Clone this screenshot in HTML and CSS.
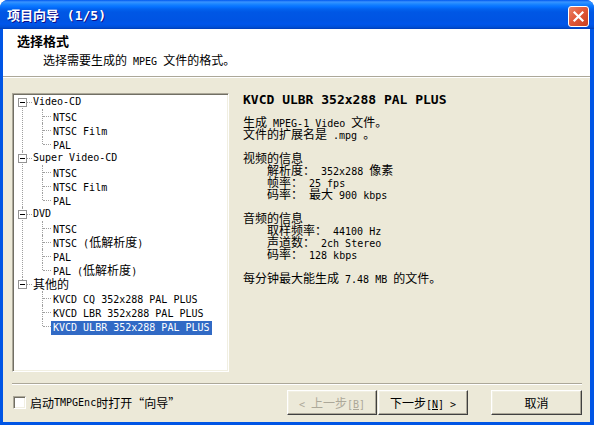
FILE: index.html
```html
<!DOCTYPE html>
<html lang="zh-CN">
<head>
    <meta charset="UTF-8">
    <meta name="viewport" content="width=device-width, initial-scale=1.0">
    <title>项目向导</title>
    <link rel="stylesheet" href="styles.css">
</head>
<body>
    <div class="window">
        <div class="titlebar">
            <span class="title">项目向导<span class="title-num"> (1/5)</span></span>
            <button class="close" aria-label="关闭">
                <svg width="21" height="21" viewBox="0 0 21 21"><path d="M6.5 6.5 L14.5 14.5 M14.5 6.5 L6.5 14.5" stroke="#fff" stroke-width="2.2" stroke-linecap="square"/></svg>
            </button>
        </div>

        <div class="frame">
            <div class="header">
                <div class="h-title">选择格式</div>
                <div class="h-sub">选择需要生成的<span class="en"> MPEG </span>文件的格式。</div>
            </div>

            <div class="body">
                <div class="main">
                    <div class="tree">
                        <div class="group">
                            <div class="node"><span class="expander"></span><span class="en">Video-CD</span></div>
                            <div class="leaf"><span class="label en">NTSC</span></div>
                            <div class="leaf"><span class="label en">NTSC Film</span></div>
                            <div class="leaf last"><span class="label en">PAL</span></div>
                        </div>
                        <div class="group">
                            <div class="node"><span class="expander"></span><span class="en">Super Video-CD</span></div>
                            <div class="leaf"><span class="label en">NTSC</span></div>
                            <div class="leaf"><span class="label en">NTSC Film</span></div>
                            <div class="leaf last"><span class="label en">PAL</span></div>
                        </div>
                        <div class="group">
                            <div class="node"><span class="expander"></span><span class="en">DVD</span></div>
                            <div class="leaf"><span class="label en">NTSC</span></div>
                            <div class="leaf"><span class="label"><span class="en">NTSC (</span>低解析度<span class="en">)</span></span></div>
                            <div class="leaf"><span class="label en">PAL</span></div>
                            <div class="leaf last"><span class="label"><span class="en">PAL (</span>低解析度<span class="en">)</span></span></div>
                        </div>
                        <div class="group">
                            <div class="node"><span class="expander"></span><span>其他的</span></div>
                            <div class="leaf"><span class="label en">KVCD CQ 352x288 PAL PLUS</span></div>
                            <div class="leaf"><span class="label en">KVCD LBR 352x288 PAL PLUS</span></div>
                            <div class="leaf last selected"><span class="label en">KVCD ULBR 352x288 PAL PLUS</span></div>
                        </div>
                    </div>

                    <div class="info">
                        <div class="info-title">KVCD ULBR 352x288 PAL PLUS</div>
                        <div class="line">生成<span class="en"> MPEG-1 Video </span>文件。</div>
                        <div class="line">文件的扩展名是<span class="en"> .mpg </span>。</div>
                        <div class="line"></div>
                        <div class="line">视频的信息</div>
                        <div class="line sub">解析度：<span class="en"> 352x288 </span>像素</div>
                        <div class="line sub">帧率：<span class="en"> 25 fps</span></div>
                        <div class="line sub">码率：<span class="en"> </span>最大<span class="en"> 900 kbps</span></div>
                        <div class="line"></div>
                        <div class="line">音频的信息</div>
                        <div class="line sub">取样频率：<span class="en"> 44100 Hz</span></div>
                        <div class="line sub">声道数：<span class="en"> 2ch Stereo</span></div>
                        <div class="line sub">码率：<span class="en"> 128 kbps</span></div>
                        <div class="line"></div>
                        <div class="line">每分钟最大能生成<span class="en"> 7.48 MB </span>的文件。</div>
                    </div>
                </div>

                <div class="sep"></div>

                <div class="footer">
                    <label class="check-label"><span class="checkbox"></span>启动<span class="en">TMPGEnc</span>时打开“向导”</label>
                    <button class="btn disabled"><span class="en">&lt; </span>上一步<span class="en">[<u>B</u>]</span></button>
                    <button class="btn next">下一步<span class="en">[<u>N</u>] &gt;</span></button>
                    <button class="btn cancel">取消</button>
                </div>
            </div>
        </div>
    </div>
</body>
</html>
```

FILE: styles.css
```css
body {
    margin: 0;
    background: #fff;
    font-family: "Noto Sans CJK SC", sans-serif;
    font-size: 12px;
    color: #000;
}
.en {
    font-family: "DejaVu Sans Mono", monospace;
    font-size: 10px;
    white-space: pre;
}
.window {
    width: 594px;
    height: 425px;
    display: flex;
    flex-direction: column;
    background: #0055e5;
    border-radius: 8px 8px 0 0;
}
.titlebar {
    height: 29px;
    flex-shrink: 0;
    display: flex;
    align-items: center;
    padding: 0 5px 0 7px;
    border-radius: 8px 8px 0 0;
    background: linear-gradient(to bottom, #0058ee 0, #3a93ff 2px, #288eff 3px, #127dff 5px, #0470ff 7px, #0262ee 9px, #0057e5 12px, #0054e3 20px, #0055eb 24px, #0050d8 27px, #003db9 29px);
    color: #fff;
}
.title {
    flex: 1;
    font-weight: bold;
    font-size: 13px;
    text-shadow: 1px 1px #0f1089;
}
.title-num {
    font-family: "DejaVu Sans Mono", monospace;
    font-size: 13px;
    white-space: pre;
}
.close {
    width: 21px;
    height: 21px;
    margin-top: 3px;
    padding: 0;
    border: 1px solid #fff;
    border-radius: 3px;
    background: linear-gradient(135deg, #e98366 0, #e2593a 45%, #c9401f 100%);
}
.close svg {
    display: block;
    margin: -1px;
}
.frame {
    flex: 1;
    margin: 0 4px 3px 3px;
    display: flex;
    flex-direction: column;
    background: #ece9d8;
}
.header {
    height: 48px;
    box-sizing: border-box;
    background: #fff;
    border-bottom: 1px solid #aca899;
    padding: 6px 0 0 14px;
}
.h-title {
    font-weight: bold;
    font-size: 13px;
    line-height: 12px;
}
.h-sub {
    margin-top: 7px;
    padding-left: 26px;
    line-height: 12px;
}
.body {
    flex: 1;
    display: flex;
    flex-direction: column;
    border-top: 1px solid #fff;
    padding: 15px 8px 0 9px;
}
.main {
    display: flex;
    height: 279px;
}
.tree {
    width: 217px;
    box-sizing: border-box;
    background: #fff;
    border: 1px solid;
    border-color: #aca899 #fff #fff #aca899;
    box-shadow: inset 1px 1px #716f64, inset -1px -1px #f1efe2;
    padding: 1px;
}
.group {
    position: relative;
}
.group::before {
    content: '';
    position: absolute;
    left: 8px;
    top: 0;
    bottom: 0;
    border-left: 1px dotted #a0a0a0;
}
.group:first-child::before {
    top: 7px;
}
.group:last-child::before {
    bottom: auto;
    height: 7px;
}
.node {
    height: 14px;
    line-height: 14px;
    display: flex;
    align-items: center;
    padding-left: 4px;
}
.expander {
    position: relative;
    z-index: 1;
    width: 9px;
    height: 9px;
    box-sizing: border-box;
    border: 1px solid #939393;
    background: #fff;
    margin-right: 6px;
}
.expander::after {
    content: '';
    position: absolute;
    left: 1px;
    top: 3px;
    width: 5px;
    height: 1px;
    background: #000;
}
.expander::before {
    content: '';
    position: absolute;
    left: 8px;
    top: 3px;
    width: 5px;
    border-top: 1px dotted #a0a0a0;
}
.leaf {
    position: relative;
    height: 14px;
    line-height: 14px;
    padding-left: 37px;
}
.leaf::before {
    content: '';
    position: absolute;
    left: 28px;
    top: 0;
    height: 14px;
    border-left: 1px dotted #a0a0a0;
}
.leaf.last::before {
    height: 7px;
}
.leaf::after {
    content: '';
    position: absolute;
    left: 29px;
    top: 7px;
    width: 8px;
    border-top: 1px dotted #a0a0a0;
}
.label {
    display: inline-block;
    height: 14px;
    line-height: 14px;
    padding: 0 2px;
}
.selected .label {
    background: #316ac5;
    color: #fff;
}
.info {
    margin-left: 14px;
}
.info-title {
    font-family: "DejaVu Sans Mono", monospace;
    font-weight: bold;
    font-size: 13px;
    line-height: 14px;
    margin-bottom: 9px;
}
.line {
    height: 12px;
    line-height: 12px;
    white-space: nowrap;
}
.line.sub {
    padding-left: 24px;
}
.sep {
    margin-top: 11px;
    border-top: 1px solid #aca899;
    border-bottom: 1px solid #fff;
}
.footer {
    display: flex;
    align-items: center;
    margin-top: 5px;
    height: 25px;
    padding-left: 1px;
}
.check-label {
    flex: 1;
    display: flex;
    align-items: center;
}
.checkbox {
    width: 13px;
    height: 13px;
    box-sizing: border-box;
    border: 1px solid;
    border-color: #aca899 #fff #fff #aca899;
    box-shadow: inset 1px 1px #716f64, inset -1px -1px #f1efe2;
    background: #fff;
    margin-right: 4px;
}
.btn {
    width: 90px;
    height: 25px;
    padding: 0;
    background: #ece9d8;
    border: 1px solid;
    border-color: #fff #404040 #404040 #fff;
    box-shadow: inset -1px -1px #aca899, inset 1px 1px #f1efe2;
    font-family: "Noto Sans CJK SC", sans-serif;
    font-size: 12px;
    color: #000;
}
.btn.disabled {
    color: #aca899;
}
.btn.next {
    margin-left: 1px;
}
.btn.cancel {
    width: 91px;
    margin-left: 23px;
}
```
